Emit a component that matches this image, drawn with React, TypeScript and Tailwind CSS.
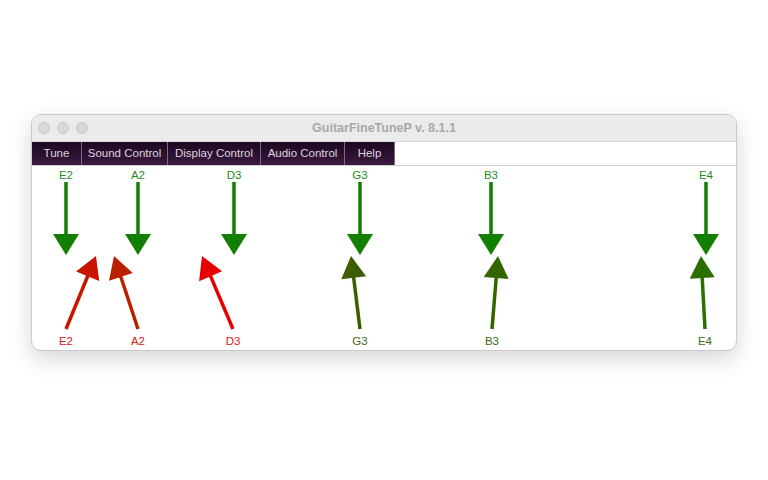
const tabs = [
  { label: 'Tune', w: 'w-[50px]' },
  { label: 'Sound Control', w: 'w-[86px]' },
  { label: 'Display Control', w: 'w-[93px]' },
  { label: 'Audio Control', w: 'w-[84px]' },
  { label: 'Help', w: 'w-[50px]' },
];

const topNotes = [
  { note: 'E2', x: 34 },
  { note: 'A2', x: 106 },
  { note: 'D3', x: 202 },
  { note: 'G3', x: 328 },
  { note: 'B3', x: 459 },
  { note: 'E4', x: 674 },
];

// measured pitch arrows: tail at the label, tip near the string line
const pitchArrows = [
  { note: 'E2', tail: [34, 163], tip: [64, 90], color: '#c81400', text: '#d42020' },
  { note: 'A2', tail: [106, 163], tip: [82, 90], color: '#b82000', text: '#d42020' },
  { note: 'D3', tail: [201, 163], tip: [170, 90], color: '#e60000', text: '#d42020' },
  { note: 'G3', tail: [328, 163], tip: [319, 90], color: '#3d5e00', text: '#3b6a14' },
  { note: 'B3', tail: [460, 163], tip: [466, 90], color: '#336600', text: '#3b6a14' },
  { note: 'E4', tail: [673, 163], tip: [669, 90], color: '#2a7000', text: '#3b6a14' },
];

function Arrow({ tail, tip, color }: { tail: number[]; tip: number[]; color: string }) {
  const dx = tip[0] - tail[0];
  const dy = tip[1] - tail[1];
  const len = Math.hypot(dx, dy);
  const ux = dx / len;
  const uy = dy / len;
  const headLen = 22;
  const half = 12.5;
  const bx = tip[0] - ux * headLen;
  const by = tip[1] - uy * headLen;
  const px = -uy;
  const py = ux;
  const pts = `${tip[0]},${tip[1]} ${bx + px * half},${by + py * half} ${bx - px * half},${by - py * half}`;

  return (
    <g>
      <line x1={tail[0]} y1={tail[1]} x2={bx + ux * 2} y2={by + uy * 2} stroke={color} strokeWidth={3.5} />
      <polygon points={pts} fill={color} />
    </g>
  );
}

export default function App() {
  return (
    <div className="min-h-[480px] bg-white pl-[31px] pt-[114px] font-['Liberation_Sans',Arial,sans-serif]">
      <div className="w-[706px] overflow-hidden rounded-[10px] border border-[#c9c9c9] bg-white shadow-[0_8px_22px_rgba(0,0,0,0.16)]">
        <div className="relative flex h-[27px] items-center border-b border-[#d9d9d9] bg-[#ebebeb] px-[6px]">
          <div className="flex gap-[7px]">
            <span className="h-[12px] w-[12px] rounded-full border border-[#c6c6c6] bg-[#d8d8d8]" />
            <span className="h-[12px] w-[12px] rounded-full border border-[#c6c6c6] bg-[#d8d8d8]" />
            <span className="h-[12px] w-[12px] rounded-full border border-[#c6c6c6] bg-[#d8d8d8]" />
          </div>
          <div className="flex-1 pr-[50px] text-center text-[12.5px] font-bold text-[#a8a8a8]">GuitarFineTuneP v. 8.1.1</div>
        </div>

        <div className="flex h-[24px] border-b border-[#cfcfcf] bg-white">
          {tabs.map((t) => (
            <div
              key={t.label}
              className={`${t.w} flex items-center justify-center border-r border-[#7d6c80] bg-gradient-to-b from-[#1c0820] to-[#3b1a40] text-[11.5px] text-[#ddd5de]`}
            >
              {t.label}
            </div>
          ))}
        </div>

        <svg width={706} height={184} className="block" style={{ fontFamily: "'Liberation Sans', Arial, sans-serif" }}>
          {topNotes.map((n) => (
            <g key={n.note}>
              <text x={n.x} y={13} fontSize={11.5} fill="#1e8a1e" textAnchor="middle">
                {n.note}
              </text>
              <line x1={n.x} y1={16} x2={n.x} y2={70} stroke="#118000" strokeWidth={3.5} />
              <polygon points={`${n.x - 13},${68} ${n.x + 13},${68} ${n.x},${89}`} fill="#118000" />
            </g>
          ))}
          {pitchArrows.map((a) => (
            <g key={a.note}>
              <Arrow tail={a.tail} tip={a.tip} color={a.color} />
              <text x={a.tail[0]} y={179} fontSize={11.5} fill={a.text} textAnchor="middle">
                {a.note}
              </text>
            </g>
          ))}
        </svg>
      </div>
    </div>
  );
}
